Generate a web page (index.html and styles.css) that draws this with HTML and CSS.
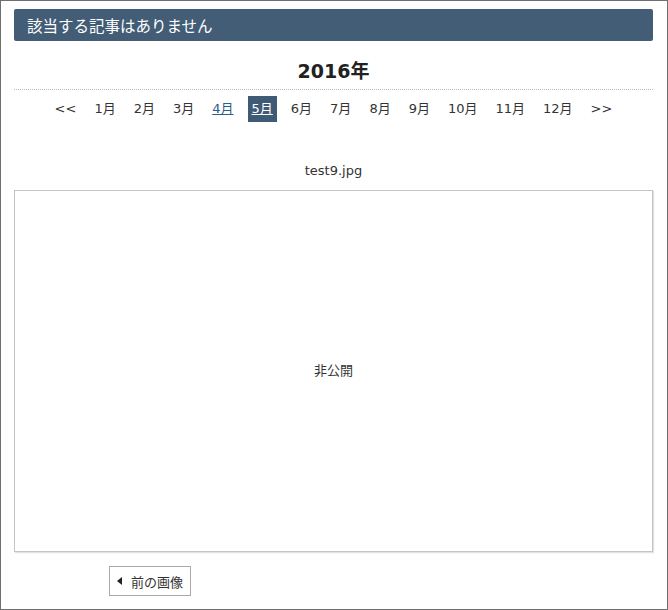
FILE: index.html
```html
<!DOCTYPE html>
<html>
	<head>
		<meta charset="utf-8">
		<link rel="stylesheet" href="styles.css">
		<title>画像アーカイブ</title>
	</head>
	<body>
		<div class="frame">
			<div class="notice">該当する記事はありません</div>
			<div class="year">2016年</div>
			<ul class="months">
				<li><span class="mon">&lt;&lt;</span></li>
				<li><span class="mon">1月</span></li>
				<li><span class="mon">2月</span></li>
				<li><span class="mon">3月</span></li>
				<li><a class="mon link" href="#">4月</a></li>
				<li><a class="mon current" href="#">5月</a></li>
				<li><span class="mon">6月</span></li>
				<li><span class="mon">7月</span></li>
				<li><span class="mon">8月</span></li>
				<li><span class="mon">9月</span></li>
				<li><span class="mon">10月</span></li>
				<li><span class="mon">11月</span></li>
				<li><span class="mon">12月</span></li>
				<li><span class="mon">&gt;&gt;</span></li>
			</ul>
			<div class="caption">test9.jpg</div>
			<div class="photo">非公開</div>
			<div class="pager">
				<a class="prev" href="#"><span class="arrow"></span>前の画像</a>
			</div>
		</div>
	</body>
</html>
```

FILE: styles.css
```css
*{
	margin: 0;
	padding: 0;
	box-sizing: border-box;
}
li{
	list-style: none;
}
body{
	font-family: "DejaVu Sans", "Noto Sans CJK JP", sans-serif;
	font-size: 13px;
	color: #333;
	background: #fff;
}
.frame{
	width: 668px;
	height: 610px;
	border: 1px solid #6e6e6e;
	padding: 8px 14px 0 13px;
}
.notice{
	height: 32px;
	line-height: 32px;
	padding-left: 13px;
	background-color: #435d76;
	color: #fff;
	font-family: "Noto Sans CJK JP", sans-serif;
	font-size: 15.5px;
	border-radius: 2px;
}
.year{
	margin-top: 15px;
	line-height: 30px;
	padding-bottom: 3px;
	border-bottom: 1px dotted #bbb;
	text-align: center;
	font-size: 19px;
	font-weight: bold;
	color: #222;
}
.months{
	margin-top: 6px;
	display: flex;
	justify-content: center;
	gap: 10px;
}
.mon{
	display: block;
	padding: 4px;
	line-height: 18px;
	color: #333;
	text-decoration: none;
}
.mon.link{
	color: #2d5d8a;
	text-decoration: underline;
}
.mon.current{
	background-color: #3f5a74;
	color: #fff;
	text-decoration: underline;
}
.caption{
	margin-top: 39px;
	line-height: 20px;
	text-align: center;
}
.photo{
	margin-top: 9px;
	height: 362px;
	border: 1px solid #c4c4c4;
	box-shadow: 1px 1px 1px #e2e2e2;
	display: flex;
	align-items: center;
	justify-content: center;
	padding-bottom: 4px;
}
.pager{
	margin-top: 14px;
	padding-left: 95px;
}
.prev{
	display: inline-flex;
	align-items: center;
	height: 30px;
	width: 82px;
	padding-left: 7px;
	border: 1px solid #aaa;
	color: #333;
	text-decoration: none;
}
.arrow{
	width: 0;
	height: 0;
	border-top: 4.5px solid transparent;
	border-bottom: 4.5px solid transparent;
	border-right: 5px solid #222;
	margin-right: 9px;
}
```
